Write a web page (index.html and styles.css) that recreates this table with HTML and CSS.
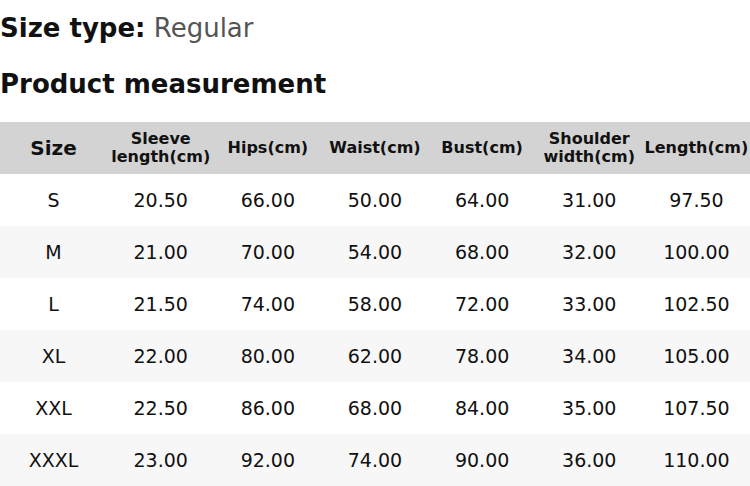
FILE: index.html
```html
<!DOCTYPE html>
<html>
<head>
<meta charset="utf-8">
<link rel="stylesheet" href="styles.css">
</head>
<body>
<div class="size-type"><span class="label">Size type:</span> <span class="value">Regular</span></div>
<h2 class="title">Product measurement</h2>
<table class="chart">
<thead>
<tr>
<th class="first">Size</th>
<th>Sleeve<br>length(cm)</th>
<th>Hips(cm)</th>
<th>Waist(cm)</th>
<th>Bust(cm)</th>
<th>Shoulder<br>width(cm)</th>
<th>Length(cm)</th>
</tr>
</thead>
<tbody>
<tr><td>S</td><td>20.50</td><td>66.00</td><td>50.00</td><td>64.00</td><td>31.00</td><td>97.50</td></tr>
<tr><td>M</td><td>21.00</td><td>70.00</td><td>54.00</td><td>68.00</td><td>32.00</td><td>100.00</td></tr>
<tr><td>L</td><td>21.50</td><td>74.00</td><td>58.00</td><td>72.00</td><td>33.00</td><td>102.50</td></tr>
<tr><td>XL</td><td>22.00</td><td>80.00</td><td>62.00</td><td>78.00</td><td>34.00</td><td>105.00</td></tr>
<tr><td>XXL</td><td>22.50</td><td>86.00</td><td>68.00</td><td>84.00</td><td>35.00</td><td>107.50</td></tr>
<tr><td>XXXL</td><td>23.00</td><td>92.00</td><td>74.00</td><td>90.00</td><td>36.00</td><td>110.00</td></tr>
</tbody>
</table>
</body>
</html>
```
FILE: styles.css
```css
html, body {
  margin: 0;
  padding: 0;
  background: #fff;
  font-family: "DejaVu Sans", sans-serif;
  color: #111;
}
.size-type {
  font-size: 26px;
  line-height: 36px;
  padding-top: 10px;
}
.size-type .label {
  font-weight: bold;
  color: #111;
}
.size-type .value {
  color: #555;
}
.title {
  margin: 0;
  font-size: 26px;
  font-weight: bold;
  line-height: 36px;
  padding-top: 20px;
  color: #111;
}
.chart {
  margin-top: 20px;
  width: 750px;
  border-collapse: collapse;
  table-layout: fixed;
}
.chart th {
  background: #d3d3d3;
  height: 52px;
  padding: 0;
  font-size: 16px;
  font-weight: bold;
  line-height: 18px;
  text-align: center;
  color: #111;
}
.chart th.first {
  font-size: 20px;
}
.chart td {
  height: 52px;
  padding: 0;
  font-size: 19px;
  text-align: center;
  color: #111;
}
.chart tbody tr:nth-child(even) td {
  background: #f7f7f7;
}
```
